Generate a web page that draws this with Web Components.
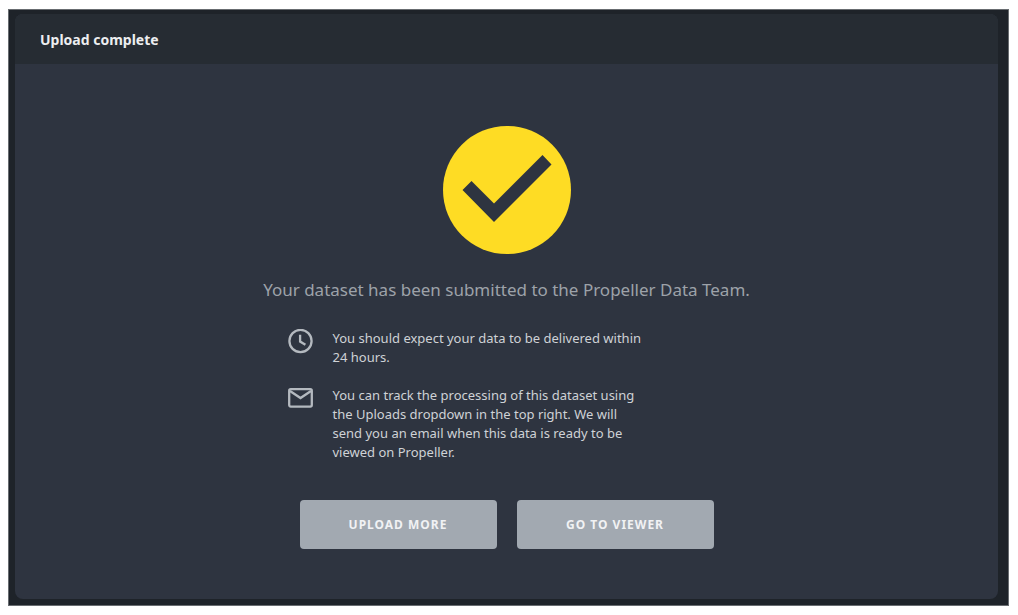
<!DOCTYPE html>
<html lang="en">
<head>
<meta charset="utf-8">
<meta name="viewport" content="width=device-width, initial-scale=1">
<title>Upload complete</title>
<style>
  body {
    margin: 0;
    background: #fff;
    font-family: "Noto Sans", sans-serif;
  }
</style>
</head>
<body>
<upload-backdrop>
  <upload-dialog>
    <span slot="title">Upload complete</span>
    <success-icon></success-icon>
    <upload-message>Your dataset has been submitted to the Propeller Data Team.</upload-message>
    <upload-notes>
      <upload-note icon="clock">You should expect your data to be delivered within 24 hours.</upload-note>
      <upload-note icon="mail">You can track the processing of this dataset using the Uploads dropdown in the top right. We will send you an email when this data is ready to be viewed on Propeller.</upload-note>
    </upload-notes>
    <action-button slot="actions">UPLOAD MORE</action-button>
    <action-button slot="actions">GO TO VIEWER</action-button>
  </upload-dialog>
</upload-backdrop>

<script>
// Attaches an open shadow root filled from the class's template markup.
class BaseElement extends HTMLElement {
  constructor() {
    super();
    const template = document.createElement('template');
    template.innerHTML = this.constructor.markup;
    this.attachShadow({ mode: 'open' }).appendChild(template.content.cloneNode(true));
  }

  $(selector) {
    return this.shadowRoot.querySelector(selector);
  }
}

class UploadBackdrop extends BaseElement {
  static markup = `
<style>
:host {
  display: flex;
  box-sizing: border-box;
  min-height: 100vh;
  padding: 9px 9px 9px 8px;
}
.backdrop {
  display: flex;
  flex: 1;
  padding: 4px 10px 6px 6px;
  border: 1px solid #686c70;
  background: #1e2329;
}
</style>
<div class="backdrop"><slot></slot></div>
`;
}

class UploadDialog extends BaseElement {
  static markup = `
<style>
:host {
  display: flex;
  flex: 1;
  min-width: 0;
}
section {
  display: flex;
  flex: 1;
  flex-direction: column;
  overflow: hidden;
  border-radius: 8px;
  background: #2e3440;
}
header {
  padding: 16px 25px 14px;
  background: #262c33;
}
h1 {
  margin: 0;
  color: #edeef0;
  font-size: 14px;
  font-weight: 700;
  line-height: 20px;
}
main {
  display: flex;
  flex: 1;
  flex-direction: column;
  align-items: center;
  padding: 62px 24px 48px;
}
footer {
  display: flex;
  flex-wrap: wrap;
  justify-content: center;
  gap: 20px;
  margin-top: 38px;
}
</style>
<section aria-labelledby="title">
  <header><h1 id="title"><slot name="title"></slot></h1></header>
  <main>
    <slot></slot>
    <footer><slot name="actions"></slot></footer>
  </main>
</section>
`;
}

class SuccessIcon extends BaseElement {
  static markup = `
<style>
:host {
  display: block;
  line-height: 0;
}
</style>
<svg width="128" height="128" viewBox="0 0 128 128" aria-hidden="true">
  <circle cx="64" cy="64" r="64" fill="#fedc24"/>
  <path d="M19.5 64 28.5 55 51 77.5 99.5 29 108.5 38.5 51 96Z" fill="#2e3440"/>
</svg>
`;
}

class UploadMessage extends BaseElement {
  static markup = `
<style>
:host {
  display: block;
  margin-top: 24px;
  color: #9da2a9;
  font-size: 17px;
  line-height: 24px;
  text-align: center;
}
p {
  margin: 0;
}
</style>
<p><slot></slot></p>
`;
}

class UploadNotes extends BaseElement {
  static markup = `
<style>
:host {
  display: flex;
  flex-direction: column;
  gap: 19px;
  box-sizing: border-box;
  width: 100%;
  max-width: 438px;
  margin-top: 27px;
}
</style>
<slot></slot>
`;
}

const noteIcons = {
  clock: '<circle cx="12.5" cy="12" r="11.1"/><path d="M12.1 5.8V12.5L17.4 15.8"/>',
  mail: '<rect x="1.2" y="3.2" width="22.6" height="17.4" rx="1.5"/><path d="M2 5 12.5 12 23 5"/>'
};

class UploadNote extends BaseElement {
  static markup = `
<style>
:host {
  display: flex;
  gap: 20px;
  color: #cfd2d6;
  font-size: 13px;
  line-height: 19px;
}
svg {
  flex: none;
  fill: none;
  stroke: #b4b9bf;
  stroke-width: 2.3;
}
p {
  max-width: 312px;
  margin: 0;
}
</style>
<svg width="25" height="25" viewBox="0 0 25 25" aria-hidden="true"></svg>
<p><slot></slot></p>
`;

  connectedCallback() {
    this.$('svg').innerHTML = noteIcons[this.getAttribute('icon')] || '';
  }
}

class ActionButton extends BaseElement {
  static markup = `
<style>
:host {
  display: block;
}
button {
  min-width: 197px;
  padding: 15px 24px;
  border: 0;
  border-radius: 4px;
  background: #a2a9b1;
  color: #f1f2f4;
  font: inherit;
  font-size: 12px;
  font-weight: 700;
  line-height: 19px;
  letter-spacing: 1px;
  cursor: pointer;
}
button:hover {
  background: #b0b6bd;
}
</style>
<button type="button"><slot></slot></button>
`;
}

customElements.define('upload-backdrop', UploadBackdrop);
customElements.define('upload-dialog', UploadDialog);
customElements.define('success-icon', SuccessIcon);
customElements.define('upload-message', UploadMessage);
customElements.define('upload-notes', UploadNotes);
customElements.define('upload-note', UploadNote);
customElements.define('action-button', ActionButton);
</script>
</body>
</html>
